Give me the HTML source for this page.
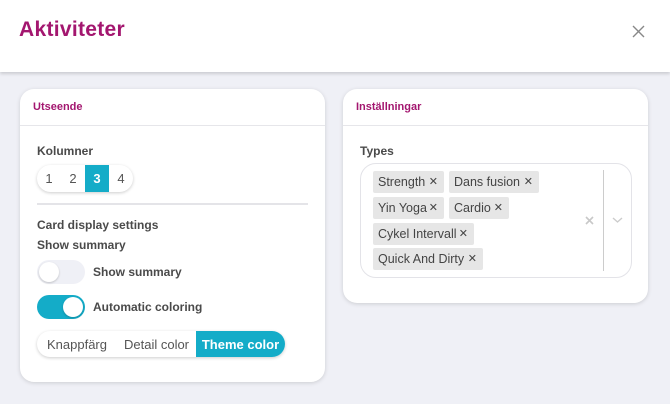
<!DOCTYPE html>
<html><head><style>
*{box-sizing:border-box;margin:0;padding:0}
body{width:670px;height:404px;background:#eff0f6;font-family:"Liberation Sans",sans-serif;position:relative;overflow:hidden;color:#4a4a4a}
.hdr{position:absolute;left:0;top:0;width:670px;height:72px;background:#fff;box-shadow:0 2px 3px rgba(0,0,0,.15)}
.title{position:absolute;left:19px;top:18px;font-size:21px;font-weight:bold;color:#a3166f;letter-spacing:.3px}
.card{position:absolute;background:#fff;border-radius:14px;box-shadow:0 1px 4px rgba(0,0,0,.15)}
.ch{height:37px;border-bottom:1px solid #e6e6ea;padding:12px 0 0 13px;font-size:11px;font-weight:bold;color:#a3166f}
.t{position:absolute;font-size:12px;font-weight:bold;color:#4a4a4a;white-space:nowrap}
.seg{position:absolute;display:flex;background:#fff;border-radius:14px;box-shadow:0 1px 3px rgba(0,0,0,.2);overflow:hidden;font-size:13px;color:#555}
.seg div{display:flex;align-items:center;justify-content:center}
.seg .on{background:#14acc8;color:#fff;font-weight:bold}
.tg{position:absolute;width:48px;height:24px;border-radius:12px}
.tg i{position:absolute;top:2px;width:20px;height:20px;border-radius:50%;background:#fff;box-shadow:0 1px 2px rgba(0,0,0,.2)}
.chip{position:absolute;height:22px;background:#e6e6e6;border-radius:2px;font-size:12.5px;color:#444;padding:4px 0 0 5px;white-space:nowrap}
.chip b{position:absolute;right:6px;top:4px;font-weight:normal;font-size:11px}
</style></head><body>
<div class="hdr"><div class="title">Aktiviteter</div>
<svg style="position:absolute;left:632px;top:25px" width="13" height="13"><path d="M1 1L12 12M12 1L1 12" stroke="#888" stroke-width="1.4"/></svg></div>

<div class="card" style="left:20px;top:89px;width:305px;height:293px"><div class="ch">Utseende</div></div>
<div class="t" style="left:37px;top:144px">Kolumner</div>
<div class="seg" style="left:37px;top:165px;width:96px;height:27px">
<div style="width:24px">1</div><div style="width:24px">2</div><div class="on" style="width:24px">3</div><div style="width:24px">4</div></div>
<div style="position:absolute;left:37px;top:203px;width:271px;height:2px;background:#e4e4e8"></div>
<div class="t" style="left:37px;top:218px">Card display settings</div>
<div class="t" style="left:37px;top:238px">Show summary</div>
<div class="tg" style="left:37px;top:260px;background:#eff0f6"><i style="left:2px"></i></div>
<div class="t" style="left:93px;top:265px">Show summary</div>
<div class="tg" style="left:37px;top:295px;background:#14acc8"><i style="left:26px"></i></div>
<div class="t" style="left:93px;top:300px">Automatic coloring</div>
<div class="seg" style="left:37px;top:331px;width:248px;height:26px">
<div style="width:80px">Knappfärg</div><div style="width:79px">Detail color</div><div class="on" style="width:89px">Theme color</div></div>

<div class="card" style="left:343px;top:89px;width:305px;height:214px"><div class="ch">Inställningar</div></div>
<div class="t" style="left:360px;top:144px">Types</div>
<div style="position:absolute;left:360px;top:163px;width:272px;height:115px;border:1px solid #e3e3e8;border-radius:16px"></div>
<div class="chip" style="left:373px;top:171px;width:71px">Strength<b>✕</b></div>
<div class="chip" style="left:449px;top:171px;width:90px">Dans fusion<b>✕</b></div>
<div class="chip" style="left:373px;top:197px;width:71px">Yin Yoga<b>✕</b></div>
<div class="chip" style="left:449px;top:197px;width:60px">Cardio<b>✕</b></div>
<div class="chip" style="left:373px;top:223px;width:101px">Cykel Intervall<b>✕</b></div>
<div class="chip" style="left:373px;top:248px;width:110px">Quick And Dirty<b>✕</b></div>
<svg style="position:absolute;left:585px;top:216px" width="9" height="9"><path d="M1 1L8 8M8 1L1 8" stroke="#c8c8c8" stroke-width="1.6"/></svg>
<div style="position:absolute;left:603px;top:170px;width:1px;height:101px;background:#ccc"></div>
<svg style="position:absolute;left:612px;top:217px" width="11" height="7"><path d="M1 1L5.5 5L10 1" stroke="#ccc" stroke-width="1.4" fill="none"/></svg>
</body></html>
